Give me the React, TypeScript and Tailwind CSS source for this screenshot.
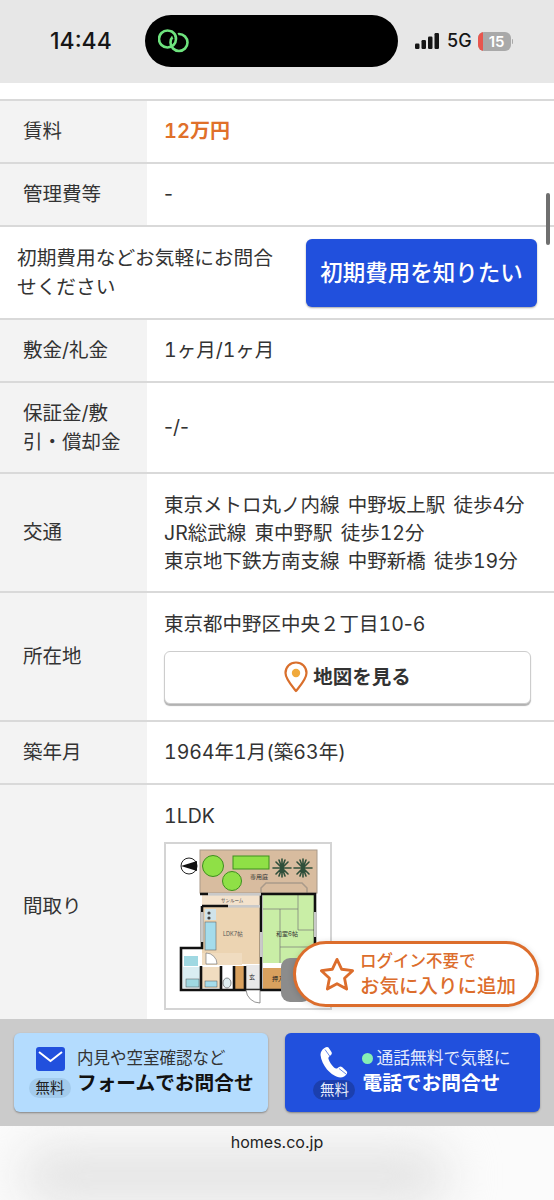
import type { ReactNode } from "react";

const jp = "font-['Inter','Noto_Sans_CJK_JP',sans-serif]";

function Row({ label, height, children }: { label: string; height: string; children: ReactNode }) {
    return (
        <div className={`flex shrink-0 border-b-2 border-[#d9d9d9] ${height}`}>
            <div className="flex w-[147px] shrink-0 items-center bg-[#f3f3f3] pl-[23px] pr-[24px] leading-[29px] text-[#333]">
                {label}
            </div>
            <div className="flex min-w-0 flex-1 flex-col justify-center pl-[17px] pr-[23px] leading-[29px] tabular-nums text-[#333] [word-spacing:3px]">
                {children}
            </div>
        </div>
    );
}

function StatusBar() {
    return (
        <div className="flex h-[83px] shrink-0 items-center bg-[#e7e7e7] pb-[1px] pl-[50px]">
            <span className="w-[95px] font-['Inter',sans-serif] text-[23px] font-medium leading-none text-[#161616]">14:44</span>
            <div className="flex h-[52px] w-[253px] items-center rounded-[26px] bg-black pl-[13px]">
                <svg width="32" height="26" viewBox="0 0 32 26" fill="none" stroke="#6ee37e" strokeWidth="2.6" strokeLinecap="round">
                    <circle cx="9.5" cy="11" r="8.5" />
                    <circle cx="21" cy="14.5" r="8.5" />
                    <path d="M14 3.6 A8.5 8.5 0 0 1 18 10" stroke="#000" strokeWidth="6" strokeLinecap="butt" />
                    <path d="M14 3.6 A8.5 8.5 0 0 1 18 10" />
                </svg>
            </div>
            <div className="ml-[17px] flex items-center">
                <svg width="25" height="18" viewBox="0 0 25 18" fill="#161616">
                    <rect x="0" y="11.5" width="4.5" height="5.5" rx="1.2" />
                    <rect x="6.5" y="8" width="4.5" height="9" rx="1.2" />
                    <rect x="13" y="4.5" width="4.5" height="12.5" rx="1.2" />
                    <rect x="19.5" y="1" width="4.5" height="16" rx="1.2" />
                </svg>
                <span className="ml-[7px] font-['Inter',sans-serif] text-[18px] font-medium leading-none text-[#161616]">5G</span>
                <div className="ml-[6px] flex h-[19px] w-[33px] items-center overflow-hidden rounded-[6px] bg-[#a9a9a9]">
                    <div className="h-full w-[5px] bg-[#e8564e]" />
                    <span className="flex-1 text-center font-['Inter',sans-serif] text-[15px] font-semibold leading-none text-white">15</span>
                </div>
                <div className="ml-[1px] h-[5px] w-[1.5px] rounded-r-sm bg-[#a9a9a9]" />
            </div>
        </div>
    );
}

function FloorPlan() {
    return (
        <div className="h-[168px] w-[168px] border-2 border-[#d4d4d4] bg-white">
            <svg width="164" height="164" viewBox="2 2 164 164" className="block">
                {/* garden */}
                <rect x="36" y="8" width="117" height="43" fill="#d8bc9f" stroke="#a99a8a" strokeWidth="1" />
                <circle cx="25" cy="24" r="8" fill="#fff" stroke="#222" strokeWidth="1" />
                <path d="M17 24 L33 19 L33 29 Z" fill="#111" />
                <circle cx="49" cy="24" r="10.5" fill="#8fe046" stroke="#3d8f1e" strokeWidth="1" />
                <circle cx="68" cy="39" r="9.5" fill="#8fe046" stroke="#3d8f1e" strokeWidth="1" />
                <rect x="69" y="14" width="36" height="13" fill="#8fe046" stroke="#3d8f1e" strokeWidth="1" />
                <g stroke="#2f4f3a" strokeWidth="1.6" strokeLinecap="round">
                    <path d="M118 17 V35 M109 26 H127 M112 20 L124 32 M124 20 L112 32 M115 18 L121 34 M121 18 L115 34" />
                    <path d="M139 17 V35 M130 26 H148 M133 20 L145 32 M145 20 L133 32 M136 18 L142 34 M142 18 L136 34" />
                </g>
                <text x="86" y="37" fontSize="6" fill="#333" className={jp}>専用庭</text>
                <path d="M97 51 V46 L102 41 H138 L143 46 V51" fill="none" stroke="#a99a8a" strokeWidth="1.5" />
                {/* rooms */}
                <rect x="38" y="53" width="58" height="10" fill="#f3e2cc" />
                <text x="57" y="60" fontSize="4.5" fill="#444" className={jp}>サンルーム</text>
                <rect x="38" y="64" width="58" height="58" fill="#ecd4b2" />
                <rect x="41" y="67" width="11" height="11" fill="#cfe3ea" />
                <circle cx="45" cy="71" r="1.6" fill="#444" />
                <circle cx="45" cy="76" r="1.6" fill="#444" />
                <rect x="41" y="80" width="11" height="28" fill="#a4dcec" stroke="#666" strokeWidth="0.6" />
                <text x="59" y="94" fontSize="5.5" fill="#555" className={jp}>LDK7帖</text>
                <rect x="99" y="53" width="52" height="68" fill="#c9eea6" />
                <path d="M99 67 H134 V53 M134 67 V88 M116 67 V121 M134 88 H151 M116 105 H151" fill="none" stroke="#777" strokeWidth="0.7" />
                <text x="112" y="94" fontSize="6" fill="#333" className={jp}>和室6帖</text>
                <rect x="99" y="126" width="36" height="21" fill="#d9a15e" />
                <text x="108" y="139" fontSize="6" fill="#222" className={jp}>押入</text>
                <rect x="82" y="123" width="14" height="24" fill="#e9e9e9" />
                <text x="85" y="137" fontSize="6" fill="#222" className={jp}>玄</text>
                <rect x="71" y="124" width="9" height="23" fill="#d9a15e" />
                <rect x="20" y="114" width="14" height="10" fill="#9fd8e2" />
                <rect x="19" y="125" width="17" height="21" fill="#d9edf2" />
                <rect x="22" y="137" width="13" height="8" fill="#9fd8e2" stroke="#555" strokeWidth="0.5" />
                <rect x="38" y="125" width="19" height="21" fill="#f0dcc0" />
                <rect x="41" y="139" width="12" height="6" fill="#a4dcec" stroke="#555" strokeWidth="0.5" />
                <rect x="58" y="130" width="12" height="17" fill="#fff" />
                <ellipse cx="63" cy="141" rx="4" ry="5" fill="#dfeef2" stroke="#444" strokeWidth="0.6" />
                <rect x="38" y="111" width="40" height="12" fill="#f0dcc0" />
                <path d="M42 122 V111 A11 11 0 0 1 53 122 Z" fill="#fff" stroke="#666" strokeWidth="0.6" />
                {/* walls */}
                <g fill="none" stroke="#111" strokeWidth="2.6">
                    <path d="M36 52 H44 M97 52 H151 V148 H97 V52 M38 64 H64 M38 64 V106 H17 V148 H96 M37 124 V148 M57 124 V148 M70 124 V148 M81 124 V148" />
                </g>
                {/* windows */}
                <g fill="#c9c9c9">
                    <rect x="44" y="51" width="53" height="2.6" />
                    <rect x="64" y="63" width="32" height="2.6" />
                    <rect x="37" y="70" width="2.6" height="30" />
                    <rect x="96" y="90" width="2.6" height="25" />
                    <rect x="150" y="70" width="2.6" height="25" />
                </g>
                <path d="M82 148 H96 V161 A14 14 0 0 1 82 148 Z" fill="#fff" stroke="#666" strokeWidth="0.7" />
                <rect x="117" y="116" width="30" height="44" rx="9" fill="#8c8c8c" />
            </svg>
        </div>
    );
}

function PhoneIcon() {
    return (
        <svg width="28" height="32" viewBox="0 0 28 32" fill="#fff">
            <path d="M4.5 2 C2 3.5 0.5 6 0.5 9 C1 14 3.5 19 7 23.5 C11 28 16 31 20.5 31.5 C23 31.5 25.5 30 27 27.5 C27.5 26.5 27 25.8 26.3 25 L22 21 C21 20.2 20 20.3 19 21 L17 22.5 C16 22.8 15 22.5 14 21.5 C11.5 19 9.5 16 8.5 13 C8.2 12 8.5 11 9.5 10.2 L11 9 C12 8 12 7 11.5 6 L8.5 1.5 C7.5 0.5 6 1 4.5 2 Z" />
            <path d="M5 3.5 L10 10.5 M19 22.5 L26 28" stroke="#2150dd" strokeWidth="0.7" fill="none" />
        </svg>
    );
}

export default function App() {
    return (
        <div className={`relative flex h-[1200px] w-[554px] flex-col overflow-hidden bg-white text-[19.5px] ${jp}`}>
            <StatusBar />
            <div className="h-[18px] shrink-0 border-b-2 border-[#d9d9d9]" />
            <div className="flex min-h-0 flex-1 flex-col overflow-hidden">
                <Row label="賃料" height="h-[63px]">
                    <span className="text-[20px] font-semibold text-[#e0702a]">12万円</span>
                </Row>
                <Row label="管理費等" height="h-[63px]">
                    <span className="normal-nums">-</span>
                </Row>
                <div className="flex h-[93px] shrink-0 items-center border-b-2 border-[#d9d9d9] pl-[17px] pr-[17px]">
                    <p className="flex-1 pr-[24px] text-[19.7px] leading-[29px] text-[#333]">初期費用などお気軽にお問合せください</p>
                    <button className="flex h-[68px] w-[231px] shrink-0 items-center justify-center rounded-[6px] bg-[#2150dd] text-[22.5px] font-medium text-white shadow-[0_1px_2px_rgba(0,0,0,0.35)]">
                        初期費用を知りたい
                    </button>
                </div>
                <Row label="敷金/礼金" height="h-[63px]">1ヶ月/1ヶ月</Row>
                <Row label="保証金/敷引・償却金" height="h-[91px]">
                    <span className="normal-nums">-/-</span>
                </Row>
                <Row label="交通" height="h-[119px]">
                    <p className="whitespace-nowrap leading-[28px]">東京メトロ丸ノ内線 中野坂上駅 徒歩4分</p>
                    <p className="whitespace-nowrap leading-[28px]">JR総武線 東中野駅 徒歩12分</p>
                    <p className="whitespace-nowrap leading-[28px]">東京地下鉄方南支線 中野新橋 徒歩19分</p>
                </Row>
                <Row label="所在地" height="h-[129px]">
                    <p>東京都中野区中央２丁目10<span className="normal-nums">-</span>6</p>
                    <button className="mt-[12px] flex h-[53px] w-[367px] items-center justify-center gap-[5px] rounded-[6px] border border-[#cdcdcd] bg-white text-[19.5px] font-bold text-[#333] shadow-[0_2px_1px_rgba(0,0,0,0.3)]">
                        <svg width="24" height="32" viewBox="0 0 24 32">
                            <path d="M12 1.5 C6 1.5 1.5 6 1.5 12 C1.5 18 8 25 12 30 C16 25 22.5 18 22.5 12 C22.5 6 18 1.5 12 1.5 Z" fill="#fff" stroke="#d96f2c" strokeWidth="2.2" strokeLinejoin="round" />
                            <circle cx="12" cy="12" r="4.2" fill="#f0a93b" />
                        </svg>
                        地図を見る
                    </button>
                </Row>
                <Row label="築年月" height="h-[63px]">1964年1月(築63年)</Row>
                <div className="flex h-[244px] shrink-0">
                    <div className="flex w-[147px] shrink-0 items-center bg-[#f3f3f3] pl-[23px] text-[#333]">間取り</div>
                    <div className="flex flex-1 flex-col pl-[17px] pt-[17px] tabular-nums text-[#333]">
                        <p className="leading-[29px]">1LDK</p>
                        <div className="mt-[11px]">
                            <FloorPlan />
                        </div>
                    </div>
                </div>
            </div>

            <div className="flex h-[107px] shrink-0 gap-[17px] bg-[#cbcbcb] pl-[14px] pr-[14px] pt-[14px]">
                <button className="flex h-[79px] w-[255px] items-center rounded-[6px] bg-[#b4dcfe] pl-[15px] shadow-[0_1px_2px_rgba(0,0,0,0.35)]">
                    <div className="flex w-[42px] flex-col items-center">
                        <svg width="29" height="24" viewBox="0 0 29 24">
                            <rect width="29" height="24" rx="3" fill="#2150dd" />
                            <path d="M3 5 L14.5 14 L26 5" fill="none" stroke="#fff" strokeWidth="2" />
                        </svg>
                        <span className="mt-[7px] w-[42px] rounded-full bg-[#a3cbec] text-[14.5px] leading-[20px] text-[#222]">無料</span>
                    </div>
                    <div className="ml-[6px] flex flex-col items-start pb-[3px]">
                        <span className="text-[16.5px] leading-[24px] text-[#333]">内見や空室確認など</span>
                        <span className="text-[19.7px] font-bold leading-[26px] text-[#111]">フォームでお問合せ</span>
                    </div>
                </button>
                <button className="flex h-[79px] w-[255px] items-center rounded-[6px] bg-[#2150dd] pl-[28px] shadow-[0_1px_2px_rgba(0,0,0,0.35)]">
                    <div className="relative flex w-[42px] flex-col items-center">
                        <PhoneIcon />
                        <span className="mt-[2px] w-[42px] rounded-full bg-[#1b3fae] text-[14.5px] leading-[20px] text-[#e8eefc]">無料</span>
                    </div>
                    <div className="ml-[7px] flex flex-col items-start pb-[3px] text-white">
                        <span className="flex items-center text-[16.75px] leading-[24px] text-[#e3eafc]">
                            <span className="mr-[3px] h-[11px] w-[11px] rounded-full bg-[#86efb4]" />
                            通話無料で気軽に
                        </span>
                        <span className="text-[19.7px] font-bold leading-[26px]">電話でお問合せ</span>
                    </div>
                </button>
            </div>

            <div className="relative h-[74px] shrink-0 overflow-hidden bg-[#fbfbfb]">
                <div className="absolute left-[20px] top-[20px] h-[60px] w-[430px] rounded-full bg-[#e4e4e4] blur-[24px]" />
                <p className="relative pt-[5px] text-center font-['Inter',sans-serif] text-[16px] leading-[22px] text-[#222]">homes.co.jp</p>
            </div>

            {/* scrollbar */}
            <div className="absolute left-[546px] top-[193px] h-[52px] w-[4px] rounded-full bg-[#6f6f6f]" />

            {/* floating favourite button */}
            <button className="absolute left-[293px] top-[941px] flex h-[66px] w-[246px] items-center rounded-full border-[3px] border-[#dc6d2c] bg-white pl-[23px] text-[#dc6d2c] shadow-[0_1px_6px_rgba(0,0,0,0.15)]">
                <svg width="36" height="34" viewBox="0 0 38 36" fill="none" stroke="#dc6d2c" strokeWidth="3" strokeLinejoin="round">
                    <path d="M19 2.5 L24 13 L35.5 14.5 L27 22.5 L29.2 34 L19 28.3 L8.8 34 L11 22.5 L2.5 14.5 L14 13 Z" />
                </svg>
                <span className="ml-[5px] flex flex-col items-start font-medium">
                    <span className="text-[16.5px] leading-[25px]">ログイン不要で</span>
                    <span className="text-[19.5px] leading-[25px]">お気に入りに追加</span>
                </span>
            </button>
        </div>
    );
}
